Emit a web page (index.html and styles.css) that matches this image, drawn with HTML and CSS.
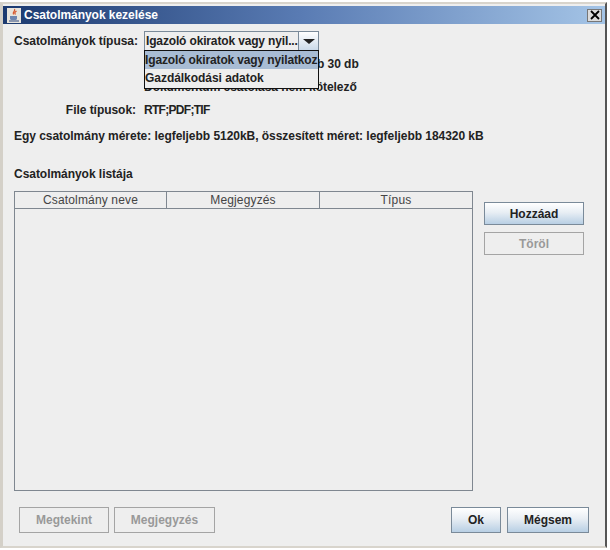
FILE: index.html
```html
<!DOCTYPE html>
<html lang="hu">
<head>
<meta charset="utf-8">
<title>Csatolmányok kezelése</title>
<link rel="stylesheet" href="styles.css">
</head>
<body>
<div class="window">
  <div class="titlebar">
    <svg class="app-icon" width="14" height="15" viewBox="0 0 14 15">
      <rect x="0" y="0" width="14" height="15" fill="#e8e4dc"/>
      <path d="M7.5 1c1.5 2-2.5 3-1 5.500M9.500 3c-1.500 1-2.500 2-1 3.500" fill="none" stroke="#d8552a" stroke-width="1.200"/>
      <path d="M3 8h7v2.500c0 1-1 1.500-2 1.500H5c-1 0-2-.5-2-1.500z" fill="#6f86b0"/>
      <path d="M2 13h10" stroke="#4a628f" stroke-width="1.200"/>
    </svg>
    <span class="title-text">Csatolmányok kezelése</span>
    <span class="close-btn">
      <svg width="10" height="10" viewBox="0 0 10 10"><path d="M1 1l8 8M9 1l-8 8" stroke="#000" stroke-width="1.800"/></svg>
    </span>
  </div>
  <div class="content">
    <div class="row row-type">
      <span class="label label-left">Csatolmányok típusa:</span>
      <div class="combo">
        <span class="combo-text">Igazoló okiratok vagy nyil...</span>
        <span class="combo-arrow"><i class="arrow"></i></span>
      </div>
    </div>
    <div class="info-count">Csatolmányok száma legfeljebb 30 db</div>
    <div class="info-required">Dokumentum csatolása nem kötelező</div>
    <div class="row row-files">
      <span class="label label-right">File típusok:</span>
      <span class="label file-types">RTF;PDF;TIF</span>
    </div>
    <div class="size-line">Egy csatolmány mérete: legfeljebb 5120kB, összesített méret: legfeljebb 184320 kB</div>
    <div class="list-title">Csatolmányok listája</div>
    <div class="list-area">
      <div class="table">
        <div class="thead">
          <span class="th">Csatolmány neve</span>
          <span class="th">Megjegyzés</span>
          <span class="th">Típus</span>
        </div>
      </div>
      <div class="side-buttons">
        <button class="btn btn-side">Hozzáad</button>
        <button class="btn btn-side btn-off">Töröl</button>
      </div>
    </div>
    <div class="footer">
      <button class="btn btn-view btn-off">Megtekint</button>
      <button class="btn btn-note btn-off">Megjegyzés</button>
      <span class="spacer"></span>
      <button class="btn btn-ok">Ok</button>
      <button class="btn btn-cancel">Mégsem</button>
    </div>
  </div>
  <div class="popup">
    <div class="popup-item popup-selected">Igazoló okiratok vagy nyilatkoz</div>
    <div class="popup-item">Gazdálkodási adatok</div>
  </div>
</div>
</body>
</html>
```
FILE: styles.css
```css
html, body {
  margin: 0;
  padding: 0;
  background: #fff;
}
body {
  width: 610px;
  height: 550px;
  overflow: hidden;
  font-family: "Liberation Sans", Arial, sans-serif;
  font-size: 12px;
  font-weight: bold;
  letter-spacing: -0.04px;
  color: #222;
}
.window {
  position: relative;
  box-sizing: border-box;
  width: 607px;
  height: 546px;
  margin-top: 2px;
  border-top: 2px solid #d8d4cc;
  border-left: 3px solid #d4d0c8;
  border-right: 2px solid #555;
  border-bottom: 2px solid #d8d4cc;
  padding-top: 2px;
  background: #eee;
}
.titlebar {
  display: flex;
  align-items: center;
  height: 18px;
  padding: 0 3px 0 4px;
  background: linear-gradient(90deg, #1c3a70 0%, #5a7cb4 50%, #a4c4e6 100%);
  color: #fff;
}
.app-icon {
  flex: none;
  margin-right: 3px;
}
.title-text {
  flex: 1;
  font-size: 12px;
}
.close-btn {
  display: flex;
  align-items: center;
  justify-content: center;
  width: 15px;
  height: 13px;
  background: #dcdcdc;
  border: 1px solid #777;
  box-sizing: border-box;
}
.content {
  padding: 0 0 0 11px;
}
.row {
  display: flex;
  align-items: center;
}
.row-type {
  height: 22px;
  margin-top: 6px;
}
.label-left {
  width: 130px;
}
.label-right {
  width: 122px;
  text-align: right;
  margin-right: 8px;
}
.file-types {
  letter-spacing: -0.7px;
}
.combo {
  display: flex;
  box-sizing: border-box;
  width: 175px;
  height: 21px;
  border: 1px solid #7a8a99;
  background: #eee;
}
.combo-text {
  flex: 1;
  padding-left: 1px;
  line-height: 18px;
  white-space: nowrap;
  letter-spacing: -0.15px;
}
.combo-arrow {
  display: flex;
  align-items: center;
  justify-content: center;
  width: 19px;
  border-left: 1px solid #7a8a99;
  background: linear-gradient(180deg, #fff, #c8d8e8);
}
.arrow {
  width: 0;
  height: 0;
  border-left: 6px solid transparent;
  border-right: 6px solid transparent;
  border-top: 5px solid #222;
}
.info-count {
  margin: 3px 0 0 130px;
  height: 18px;
  line-height: 18px;
  white-space: nowrap;
}
.info-required {
  margin: 7px 0 0 130px;
  height: 14px;
  line-height: 14px;
}
.row-files {
  height: 18px;
  margin-top: 7px;
}
.size-line {
  height: 18px;
  line-height: 18px;
  margin-top: 8px;
  white-space: nowrap;
}
.list-title {
  height: 18px;
  line-height: 18px;
  margin-top: 20px;
}
.list-area {
  display: flex;
  margin-top: 8px;
}
.table {
  box-sizing: border-box;
  width: 459px;
  height: 300px;
  border: 1px solid #7f8790;
}
.thead {
  display: grid;
  grid-template-columns: 152px 153px 1fr;
  height: 17px;
  box-sizing: border-box;
  border-bottom: 1px solid #7f8790;
}
.th {
  font-weight: normal;
  text-align: center;
  line-height: 17px;
  letter-spacing: 0.15px;
  color: #444;
  border-right: 1px solid #7f8790;
}
.th:last-child {
  border-right: 0;
}
.side-buttons {
  display: flex;
  flex-direction: column;
  gap: 7px;
  margin: 11px 0 0 11px;
}
.btn {
  box-sizing: border-box;
  border: 1px solid #7a8a99;
  padding: 0;
  font-family: inherit;
  font-size: 12px;
  font-weight: bold;
  color: #222;
  background: linear-gradient(180deg, #fff 0%, #e8eef4 45%, #b8cfe4 100%);
}
.btn-side {
  width: 100px;
  height: 23px;
}
.btn-off {
  background: #eee;
  color: #999;
  border-color: #a4a4a4;
}
.footer {
  display: flex;
  margin-top: 16px;
  padding-left: 5px;
}
.spacer {
  flex: none;
  width: 236px;
}
.btn-view {
  width: 90px;
  height: 26px;
}
.btn-note {
  width: 101px;
  height: 26px;
  margin-left: 5px;
}
.btn-ok {
  width: 50px;
  height: 26px;
}
.btn-cancel {
  width: 82px;
  height: 26px;
  margin-left: 6px;
}
.popup {
  position: absolute;
  left: 141px;
  top: 46px;
  box-sizing: border-box;
  width: 175px;
  height: 39px;
  border: 1px solid #111;
  background: #eee;
}
.popup-item {
  height: 18px;
  line-height: 18px;
  white-space: nowrap;
  overflow: hidden;
}
.popup-selected {
  background: #a8bcd4;
  letter-spacing: -0.14px;
}
```
